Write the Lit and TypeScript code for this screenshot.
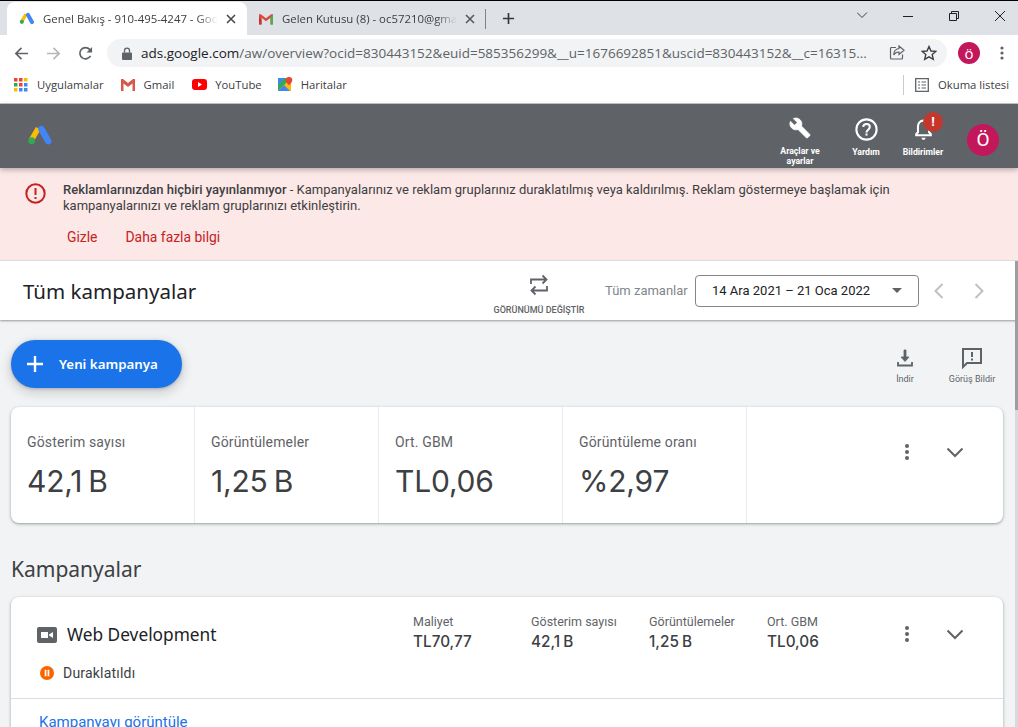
import { LitElement, html, css, svg } from "lit";
import { customElement } from "lit/decorators.js";

const adsLogo = (s: number) => svg`<svg width="${s}" height="${s}" viewBox="0 0 24 24"><path d="M8.2 3.6 1.9 14.6l4.3 2.5 6.4-11z" fill="#fbbc04"/><path d="M15.9 4.2a3 3 0 0 0-5.2 3l6.3 11a3 3 0 0 0 5.2-3z" fill="#4285f4"/><circle cx="4.3" cy="16.3" r="3.1" fill="#34a853"/></svg>`;
const gmail = svg`<svg width="16" height="16" viewBox="0 0 16 16"><path d="M1 3.2h1.8L8 7.2l5.2-4H15v10.3h-2.5V6.8L8 10.2 3.5 6.8v6.7H1z" fill="#d9493c"/><path d="M1 3.2v3l2.5 1.900v5.400H1.800A.8.8 0 0 1 1 12.700z" fill="#c5372c"/><path d="M15 3.200v9.500a.8.8 0 0 1-.8.8h-1.700V6.600z" fill="#4caf50"/></svg>`;
const kebab = svg`<svg width="6" height="16" viewBox="0 0 6 16"><circle cx="3" cy="2" r="2" fill="#5f6368"/><circle cx="3" cy="8" r="2" fill="#5f6368"/><circle cx="3" cy="14" r="2" fill="#5f6368"/></svg>`;
const chevron = svg`<svg width="18" height="11" viewBox="0 0 18 11"><path d="M1.500 1.500 9 9l7.500-7.500" fill="none" stroke="#5f6368" stroke-width="2"/></svg>`;

@customElement("app-root")
export class AppRoot extends LitElement {
  static styles = css`
    :host { display: block; width: 1018px; height: 727px; overflow: hidden; position: relative; background: #f1f3f4; font-family: Roboto, sans-serif; color: #3c4043; }
    .chrome { font-family: "Open Sans", "Noto Sans", sans-serif; }
    .tabstrip { height: 34px; border-top: 1px solid #000; background: #dee1e6; display: flex; align-items: flex-end; padding-left: 7px; }
    .tab { height: 33px; width: 240px; display: flex; align-items: center; padding: 0 11px 0 12px; box-sizing: border-box; font-size: 11.4px; color: #3c4043; gap: 8px; white-space: nowrap; }
    .tab.active { background: #fff; border-radius: 8px 8px 0 0; }
    .tab.second { width: 238px; padding-left: 11px; padding-right: 10px; }
    .tab .t { flex: 1; overflow: hidden; -webkit-mask-image: linear-gradient(90deg,#000 88%,transparent); mask-image: linear-gradient(90deg,#000 88%,transparent); }
    .tab-sep { width: 1px; height: 20px; background: #7f8388; margin-bottom: 6px; }
    .plus { align-self: center; margin: 0 0 0 16px; width: 13px; height: 13px; }
    .spacer { flex: 1; }
    .wc { display: flex; align-items: center; height: 30px; align-self: flex-start; }
    .wc svg { display: block; }
    .toolbar { height: 34px; background: #fff; display: flex; align-items: center; padding-top: 2px; box-sizing: border-box; }
    .nav { display: flex; gap: 17px; padding-left: 14px; width: 94px; box-sizing: border-box; align-items: center; }
    .omni { width: 840px; height: 28px; margin-left: 13px; border-radius: 14px; background: #f1f3f4; display: flex; align-items: center; padding: 0 10px 0 14px; box-sizing: border-box; font-size: 13.5px; color: #5f6368; white-space: nowrap; }
    .omni b { font-weight: 400; color: #202124; }
    .lock { margin-right: 8px; flex: none; }
    .omni .u { flex: 1; overflow: hidden; }
    .omni .end { display: flex; gap: 16px; align-items: center; margin-left: 6px; }
    .profile { width: 22px; height: 22px; border-radius: 50%; background: #c2185b; color: #fff; font-size: 15px; display: flex; align-items: center; justify-content: center; margin-left: 11px; }
    .menu { margin-left: 20px; display: block; }
    .bookmarks { height: 35px; background: #fff; border-bottom: 1px solid #c4c7ca; display: flex; align-items: center; font-size: 11.3px; color: #3c4043; padding: 0 0 3px 14px; box-sizing: border-box; }
    .bm { display: flex; align-items: center; gap: 8px; margin-right: 16px; }
    .bm.first { gap: 9px; }
    .bm.wide { margin-right: 18px; }
    .reading { margin-left: auto; display: flex; align-items: center; height: 20px; border-left: 1px solid #c8cacd; padding: 0 9px 0 11px; gap: 9px; }
    .adsbar { height: 64px; background: #5f6368; display: flex; align-items: center; padding-left: 27px; position: relative; z-index: 2; box-shadow: 0 2px 5px rgba(60,64,67,.35); }
    .actions { margin-left: auto; display: flex; align-items: flex-start; height: 64px; color: #fff; font-size: 8.7px; font-weight: 700; text-align: center; line-height: 10px; }
    .act { display: flex; flex-direction: column; align-items: center; padding-top: 13px; position: relative; }
    .act svg { display: block; margin-bottom: 4px; }
    .act span { margin-top: 1px; }
    .act .wrench { margin-bottom: 7px; }
    .a1 { width: 56px; margin-right: 18px; }
    .a2 { width: 40px; margin-right: 13px; }
    .a3 { width: 48px; margin-right: 20px; }
    .badge { position: absolute; left: 24px; top: 8px; width: 20px; height: 20px; border-radius: 50%; background: #c5372c; color: #fff; font-size: 13px; line-height: 20px; }
    .avatar { width: 32px; height: 32px; border-radius: 50%; background: #c2185b; color: #fff; font-size: 19px; display: flex; align-items: center; justify-content: center; margin: 20px 19px 0 0; font-weight: 400; }
    .banner { height: 93px; background: #fce8e6; display: grid; grid-template-columns: 63px 1fr; box-sizing: border-box; padding-top: 14px; font-size: 13px; line-height: 16px; color: #3c4043; border-bottom: 1px solid #e2e3e5; }
    .banner .ic { padding: 1px 0 0 25px; }
    .banner strong { font-weight: 500; }
    .msg { width: 880px; }
    .links { display: flex; gap: 28px; margin: 15px 0 0 4px; color: #c5221f; font-size: 13.9px; line-height: 17px; }
    .pagebar { height: 59px; background: #fff; display: flex; align-items: center; box-shadow: 0 1px 2px rgba(60,64,67,.5); position: relative; box-sizing: border-box; padding-left: 23px; }
    .pagebar h1 { font: 400 20.5px "Noto Sans", Roboto, sans-serif; margin: 0; color: #202124; width: 466px; }
    .switch { width: 100px; display: flex; flex-direction: column; align-items: center; font-size: 9px; color: #5f6368; padding-top: 7px; gap: 9px; font-weight: 500; white-space: nowrap; }
    .switch svg { display: block; }
    .range { color: #80868b; font-size: 13px; margin-left: 16px; width: 90px; }
    .dd { width: 224px; height: 32px; box-sizing: border-box; border: 1px solid #80868b; border-radius: 4px; display: flex; align-items: center; padding: 0 16px; font-size: 13px; color: #202124; justify-content: space-between; }
    .caret { width: 0; height: 0; border: 5px solid transparent; border-top-color: #5f6368; border-bottom: 0; }
    .arrows { display: flex; gap: 16px; margin-left: 8px; }
    .content { padding: 20px 11px 0; box-sizing: border-box; width: 1015px; }
    .row1 { display: flex; justify-content: space-between; height: 67px; }
    .fab { width: 171px; height: 48px; border-radius: 24px; background: #1a73e8; color: #fff; display: flex; align-items: center; padding-left: 14px; box-sizing: border-box; font: 600 13.3px "Noto Sans", Roboto, sans-serif; gap: 14px; box-shadow: 0 1px 3px rgba(60,64,67,.3), 0 4px 8px 3px rgba(60,64,67,.15); }
    .tools { display: flex; margin-right: 4px; font-size: 9px; color: #5f6368; padding-top: 7px; }
    .tool { display: flex; flex-direction: column; align-items: center; gap: 5px; white-space: nowrap; }
    .tool svg { display: block; }
    .tool.one { width: 54px; margin-right: 12px; } .tool.two { width: 56px; }
    .card { background: #fff; border-radius: 8px; box-shadow: 0 1px 2px rgba(60,64,67,.3), 0 1px 3px 1px rgba(60,64,67,.15); width: 992px; }
    .stats { height: 116px; display: flex; }
    .stat { width: 184px; box-sizing: border-box; border-right: 1px solid #e8eaed; padding: 27px 0 0 16px; }
    .stat .l { font-size: 14px; line-height: 16px; color: #5f6368; letter-spacing: .15px; }
    .stat .v { font: 400 30px/36px Inter, Roboto, sans-serif; color: #3c4043; margin-top: 13px; word-spacing: -2px; letter-spacing: -.2px; }
    .ctrls { flex: 1; display: flex; align-items: center; gap: 36px; padding: 37px 0 0 157px; height: 16px; }
    .ctrls svg { display: block; flex: none; }
    .hdr { font: 400 21px/24px "Noto Sans", Roboto, sans-serif; color: #3c4043; margin: 34px 0 16px; }
    .camp-top { height: 102px; display: flex; border-bottom: 1px solid #dadce0; box-sizing: border-box; }
    .camp-left { width: 402px; padding: 24px 0 0 26px; box-sizing: border-box; }
    .title { display: flex; align-items: center; gap: 10px; font: 400 17.3px/28px "Noto Sans", Roboto, sans-serif; color: #202124; }
    .status { display: flex; align-items: center; gap: 9px; margin: 14px 0 0 3px; font-size: 14px; letter-spacing: .2px; color: #3c4043; font-weight: 400; line-height: 20px; }
    .m { width: 118px; padding-top: 17px; font-size: 12.5px; line-height: 16px; color: #5f6368; }
    .m b { display: block; font: 500 15.3px/18px Inter, Roboto, sans-serif; color: #3c4043; margin-top: 3px; word-spacing: -1px; }
    .m.w4 { width: 126px; }
    .camp-ctrls { display: flex; align-items: center; gap: 36px; padding-top: 29px; height: 16px; margin-left: 11px; }
    .camp-ctrls svg { display: block; flex: none; }
    .view { padding: 14px 0 0 28px; font-size: 15px; color: #1a73e8; line-height: 18px; height: 40px; }
    .scroll { position: absolute; right: 0; top: 261px; width: 3px; bottom: 0; background: #d8d9da; }
    .thumb { height: 149px; background: #9c9d9e; }
  `;

  render() {
    return html`
      <div class="chrome">
        <div class="tabstrip">
          <div class="tab active">
            ${adsLogo(16)}
            <span class="t">Genel Bakış - 910-495-4247 - Google Ads</span>
            <svg width="10" height="10" viewBox="0 0 10 10"><path d="M1 1l8 8M9 1l-8 8" stroke="#45494d" stroke-width="1.600"/></svg>
          </div>
          <div class="tab second">
            ${gmail}
            <span class="t">Gelen Kutusu (8) - oc57210@gmail.com</span>
            <svg width="10" height="10" viewBox="0 0 10 10"><path d="M1 1l8 8M9 1l-8 8" stroke="#55595d" stroke-width="1.600"/></svg>
          </div>
          <div class="tab-sep"></div>
          <svg class="plus" viewBox="0 0 14 14"><path d="M7 1v12M1 7h12" stroke="#35383b" stroke-width="1.800"/></svg>
          <div class="spacer"></div>
          <div class="wc">
            <svg width="46" height="30" viewBox="0 0 46 30"><path d="M0 11.500l5 5 5-5" fill="none" stroke="#3c4043"/></svg>
            <svg width="46" height="30" viewBox="0 0 46 30"><path d="M0 15.500h10" stroke="#202124"/></svg>
            <svg width="46" height="30" viewBox="0 0 46 30"><path d="M.5 12.500h7v7h-7zM2.500 12.500v-2h7v7h-2" fill="none" stroke="#202124"/></svg>
            <svg width="23" height="30" viewBox="0 0 23 30"><path d="M0 10l10 10M10 10L0 20" stroke="#202124"/></svg>
          </div>
        </div>
        <div class="toolbar">
          <div class="nav">
            <svg width="15" height="15" viewBox="0 0 16 16"><path d="M15 8H2M8 2 2 8l6 6" fill="none" stroke="#5f6368" stroke-width="1.800"/></svg>
            <svg width="15" height="15" viewBox="0 0 16 16"><path d="M1 8h13M8 2l6 6-6 6" fill="none" stroke="#b5b7ba" stroke-width="1.800"/></svg>
            <svg width="15" height="15" viewBox="0 0 16 16"><path d="M13.300 10.500A6 6 0 1 1 12.400 3.600L14.500 6" fill="none" stroke="#5f6368" stroke-width="1.800"/><path d="M15 1v6H9z" fill="#5f6368"/></svg>
          </div>
          <div class="omni">
            <svg class="lock" width="12" height="13" viewBox="0 0 12 13"><path d="M2 5.500h8a1 1 0 0 1 1 1V12a1 1 0 0 1-1 1H2a1 1 0 0 1-1-1V6.500a1 1 0 0 1 1-1z" fill="#5f6368"/><path d="M3.500 5.500V3.700a2.500 2.500 0 0 1 5 0v1.800" fill="none" stroke="#5f6368" stroke-width="1.300"/></svg>
            <span class="u"><b>ads.google.com</b>/aw/overview?ocid=830443152&euid=585356299&__u=1676692851&uscid=830443152&__c=16315...</span>
            <span class="end">
              <svg width="16" height="16" viewBox="0 0 16 16"><path d="M7 2.500H2.500a1 1 0 0 0-1 1v9.500a1 1 0 0 0 1 1h10a1 1 0 0 0 1-1V9.500" fill="none" stroke="#5f6368" stroke-width="1.200"/><path d="M10 1l5 4.200L10 9.400V7C7.500 7 5.800 8 4.700 10c0-3.500 2-6 5.300-6.500z" fill="none" stroke="#5f6368" stroke-width="1.200"/></svg>
              <svg width="16" height="16" viewBox="0 0 16 16"><path d="M8 1.500l2 4.500 4.800.4-3.600 3.200 1.100 4.700L8 11.800l-4.300 2.500 1.100-4.700L1.200 6.400 6 6z" fill="none" stroke="#3c4043" stroke-width="1.400"/></svg>
            </span>
          </div>
          <div class="profile">ö</div>
          <svg class="menu" width="4" height="14" viewBox="0 0 4 14"><circle cx="2" cy="2" r="1.600" fill="#5f6368"/><circle cx="2" cy="7" r="1.600" fill="#5f6368"/><circle cx="2" cy="12" r="1.600" fill="#5f6368"/></svg>
        </div>
        <div class="bookmarks">
          <div class="bm first">
            <svg width="14" height="14" viewBox="0 0 14 14"><rect x="0" width="3.500" height="3.500" fill="#ea4335"/><rect x="5" width="3.500" height="3.500" fill="#ea4335"/><rect x="10" width="3.500" height="3.500" fill="#fbbc04"/><rect x="0" y="5" width="3.500" height="3.500" fill="#34a853"/><rect x="5" y="5" width="3.500" height="3.500" fill="#ea4335"/><rect x="10" y="5" width="3.500" height="3.500" fill="#4285f4"/><rect x="0" y="10" width="3.500" height="3.500" fill="#fbbc04"/><rect x="5" y="10" width="3.500" height="3.500" fill="#4285f4"/><rect x="10" y="10" width="3.500" height="3.500" fill="#4285f4"/></svg>
            Uygulamalar
          </div>
          <div class="bm wide">
            <svg width="16" height="14" viewBox="0 0 16 14"><path d="M1 1h2l5 4 5-4h2v12h-2.500V5.500L8 9 3.500 5.500V13H1z" fill="#d9584c"/></svg>
            Gmail
          </div>
          <div class="bm">
            <svg width="15" height="11" viewBox="0 0 15 11"><rect width="15" height="11" rx="3" fill="#f00"/><path d="M6 3l4 2.500L6 8z" fill="#fff"/></svg>
            YouTube
          </div>
          <div class="bm">
            <svg width="15" height="15" viewBox="0 0 15 15"><rect y="1" width="13" height="13" fill="#34a853"/><path d="M0 14 13 1v13z" fill="#fbbc04"/><path d="M0 1h7L0 8z" fill="#4285f4"/><path d="M0 14l6-6 6 6z" fill="#4285f4"/><path d="M11 0a3.300 3.300 0 0 1 3.300 3.300c0 2-3.300 5-3.300 5s-3.300-3-3.300-5A3.300 3.300 0 0 1 11 0z" fill="#ea4335"/></svg>
            Haritalar
          </div>
          <div class="reading">
            <svg width="14" height="14" viewBox="0 0 14 14"><path d="M.7.7h12.600v12.600H.7z" fill="none" stroke="#5f6368" stroke-width="1.300"/><path d="M3 4h2M6.500 4H11M3 7h2M6.500 7H11M3 10h2M6.500 10H11" stroke="#5f6368" stroke-width="1.200"/></svg>
            Okuma listesi
          </div>
        </div>
      </div>

      <div class="adsbar">
        ${adsLogo(26)}
        <div class="actions">
          <div class="act a1">
            <svg class="wrench" width="22" height="22" viewBox="0 0 24 24"><path d="M22.700 19l-9.100-9.100c.9-2.300.4-5-1.500-6.900-2-2-5-2.400-7.400-1.300L9 6 6 9 1.600 4.700C.4 7.100.9 10.100 2.900 12.100c1.900 1.900 4.600 2.400 6.900 1.500l9.100 9.100c.4.400 1 .4 1.400 0l2.300-2.300c.5-.4.500-1.100.1-1.400z" fill="#fff" stroke="#fff" stroke-width=".8"/></svg>
            Araçlar ve<br>ayarlar
          </div>
          <div class="act a2">
            <svg width="25" height="25" viewBox="0 0 24 24"><circle cx="12" cy="12" r="9.700" fill="none" stroke="#fff" stroke-width="2"/><path d="M8.800 9.500A3.200 3.200 0 0 1 12 6.800c1.900 0 3.200 1.300 3.200 2.900 0 2.400-3.200 2.600-3.200 5.100" fill="none" stroke="#fff" stroke-width="2"/><rect x="11" y="15.800" width="2" height="2" fill="#fff"/></svg>
            <span>Yardım</span>
          </div>
          <div class="act a3">
            <svg width="25" height="25" viewBox="0 0 24 24"><path d="M12 3.500c-3.300 0-5.300 2.500-5.300 5.700v5.300L5 16.500v1h14v-1l-1.700-2V9.200c0-3.200-2-5.700-5.300-5.700z" fill="none" stroke="#fff" stroke-width="2"/><path d="M10 20h4a2 2 0 0 1-4 0z" fill="#fff"/></svg>
            <span>Bildirimler</span>
            <div class="badge">!</div>
          </div>
          <div class="avatar">Ö</div>
        </div>
      </div>

      <div class="banner">
        <div class="ic">
          <svg width="21" height="21" viewBox="0 0 21 21"><circle cx="10.500" cy="10.500" r="9.200" fill="none" stroke="#c5221f" stroke-width="2"/><path d="M9.500 5h2v7h-2zM9.500 14h2v2h-2z" fill="#c5221f"/></svg>
        </div>
        <div>
          <div class="msg"><strong>Reklamlarınızdan hiçbiri yayınlanmıyor</strong> - Kampanyalarınız ve reklam gruplarınız duraklatılmış veya kaldırılmış. Reklam göstermeye başlamak için kampanyalarınızı ve reklam gruplarınızı etkinleştirin.</div>
          <div class="links"><span>Gizle</span><span>Daha fazla bilgi</span></div>
        </div>
      </div>

      <div class="pagebar">
        <h1>Tüm kampanyalar</h1>
        <div class="switch">
          <svg width="20" height="22" viewBox="0 0 20 22"><path d="M2 10V5.500h15M13.500 1.500 17.500 5.500 13.500 9.500M18 12v4.500H3M6.500 12.500 2.500 16.500 6.500 20.500" fill="none" stroke="#5f6368" stroke-width="1.800"/></svg>
          GÖRÜNÜMÜ DEĞİŞTİR
        </div>
        <div class="range">Tüm zamanlar</div>
        <div class="dd"><span>14 Ara 2021 – 21 Oca 2022</span><span class="caret"></span></div>
        <div class="arrows">
          <svg width="24" height="24" viewBox="0 0 24 24"><path d="M15.500 5 8.500 12l7 7" fill="none" stroke="#bdc1c6" stroke-width="2"/></svg>
          <svg width="24" height="24" viewBox="0 0 24 24"><path d="M8.500 5l7 7-7 7" fill="none" stroke="#bdc1c6" stroke-width="2"/></svg>
        </div>
      </div>

      <div class="content">
        <div class="row1">
          <div class="fab">
            <svg width="20" height="20" viewBox="0 0 20 20"><path d="M10 2v16M2 10h16" stroke="#fff" stroke-width="2.400"/></svg>
            Yeni kampanya
          </div>
          <div class="tools">
            <div class="tool one">
              <svg width="20" height="22" viewBox="0 0 20 22"><path d="M9 3h2v7h3l-4 4.500L6 10h3z" fill="#5f6368" stroke="#5f6368" stroke-width=".8"/><path d="M3 15v3.500h14V15" fill="none" stroke="#5f6368" stroke-width="1.800"/></svg>
              İndir
            </div>
            <div class="tool two">
              <svg width="22" height="22" viewBox="0 0 22 22"><path d="M2 2h18v14H6l-4 4z" fill="none" stroke="#5f6368" stroke-width="2"/><path d="M10 5h2v5h-2zM10 11.500h2v2h-2z" fill="#5f6368"/></svg>
              Görüş Bildir
            </div>
          </div>
        </div>

        <div class="card stats">
          <div class="stat"><div class="l">Gösterim sayısı</div><div class="v">42,1 B</div></div>
          <div class="stat"><div class="l">Görüntülemeler</div><div class="v">1,25 B</div></div>
          <div class="stat"><div class="l">Ort. GBM</div><div class="v">TL0,06</div></div>
          <div class="stat"><div class="l">Görüntüleme oranı</div><div class="v">%2,97</div></div>
          <div class="ctrls">${kebab}${chevron}</div>
        </div>

        <div class="hdr">Kampanyalar</div>

        <div class="card">
          <div class="camp-top">
            <div class="camp-left">
              <div class="title">
                <svg width="20" height="16" viewBox="0 0 20 16"><rect width="20" height="16" rx="2" fill="#5f6368"/><path d="M4 5h7v6H4zM12 7.500l4-2.500v6l-4-2.500z" fill="#fff"/></svg>
                Web Development
              </div>
              <div class="status">
                <svg width="14" height="14" viewBox="0 0 14 14"><circle cx="7" cy="7" r="7" fill="#fa6400"/><path d="M4.700 3.800h1.700v6.400H4.700zM7.600 3.800h1.700v6.400H7.600z" fill="#fff"/></svg>
                Duraklatıldı
              </div>
            </div>
            <div class="m">Maliyet<b>TL70,77</b></div>
            <div class="m">Gösterim sayısı<b>42,1 B</b></div>
            <div class="m">Görüntülemeler<b>1,25 B</b></div>
            <div class="m w4">Ort. GBM<b>TL0,06</b></div>
            <div class="camp-ctrls">${kebab}${chevron}</div>
          </div>
          <div class="view">Kampanyayı görüntüle</div>
        </div>
      </div>
      <div class="scroll"><div class="thumb"></div></div>
    `;
  }
}
